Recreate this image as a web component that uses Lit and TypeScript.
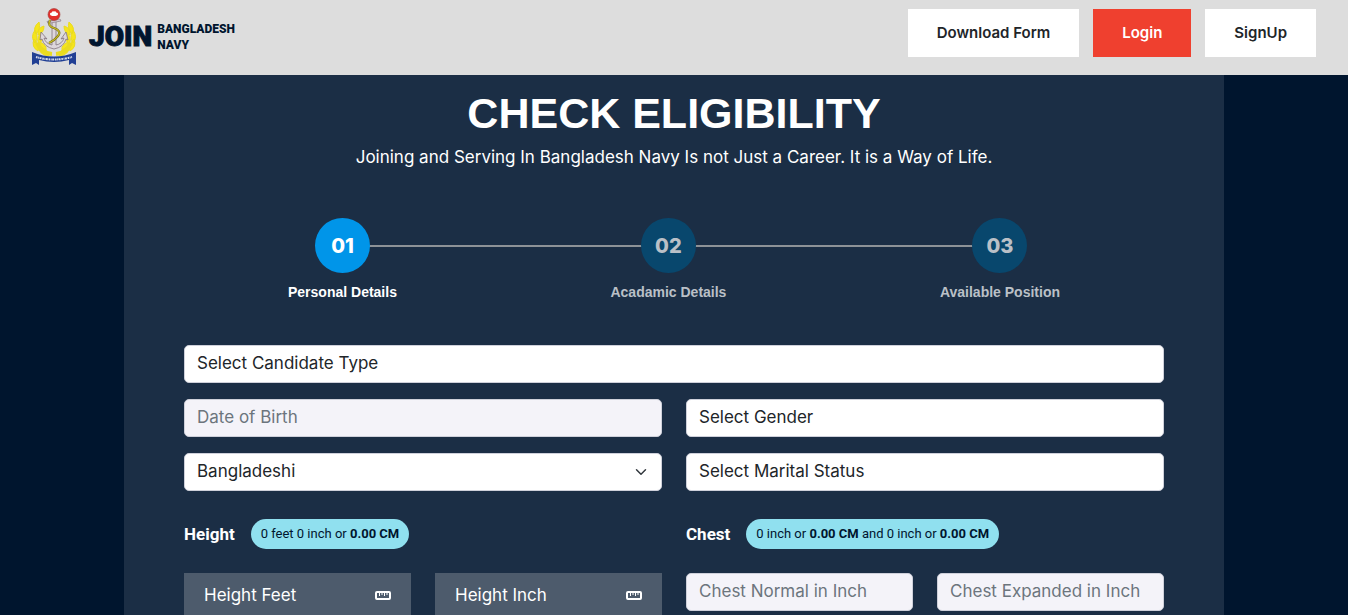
import { LitElement, html, css } from "lit";
import { customElement, property } from "lit/decorators.js";

const ruler = html`<svg class="ruler" viewBox="0 0 16 9" aria-hidden="true">
  <rect x="1" y="1" width="14" height="7" rx="1" fill="none" stroke="#fff" stroke-width="2" />
  <path d="M4.500 1v4M7 1v3M9.500 1v4M12 1v3" stroke="#fff" stroke-width="1" />
</svg>`;

@customElement("navy-logo")
export class NavyLogo extends LitElement {
  static styles = css`
    :host { display: block; }
    .brand { display: flex; align-items: center; color: #00152e; text-decoration: none; }
    .emblem { width: 44px; height: 58px; margin-right: 13px; }
    .name { display: flex; align-items: center; gap: 5px; font-family: Roboto, sans-serif; font-weight: 900; }
    .join { font-size: 28px; line-height: 34px; -webkit-text-stroke: 1px #00152e; }
    .rest { display: flex; flex-direction: column; font-size: 12px; line-height: 16px; }
  `;
  render() {
    return html`<a class="brand" href="#">
      <svg class="emblem" viewBox="0 0 44 58" aria-hidden="true">
        <g fill="#f6e51c" stroke="#eadb20" stroke-width="1" stroke-linejoin="round">
          <path d="M7 14Q0 20 4 26Q9 21 7 14ZM3 22Q-2 29 3 35Q7 29 3 22ZM2 31Q-1 39 6 43Q8 36 2 31ZM6 38Q7 47 17 48Q15 40 6 38ZM12 18Q5 20 6 27Q12 25 12 18ZM8 26Q4 31 7 36Q12 32 8 26ZM8 34Q8 41 14 42Q15 37 8 34Z" />
          <path d="M37 14Q44 20 40 26Q35 21 37 14ZM41 22Q46 29 41 35Q37 29 41 22ZM42 31Q45 39 38 43Q36 36 42 31ZM38 38Q37 47 27 48Q29 40 38 38ZM32 18Q39 20 38 27Q32 25 32 18ZM36 26Q40 31 37 36Q32 32 36 26ZM36 34Q36 41 30 42Q29 37 36 34Z" />
          <path d="M5 35Q9 45 20 46M39 35Q35 45 24 46" fill="none" stroke-width="4" />
        </g>
        <path d="M20 11h4v26q6-1 8-7l-3 1 5-7 2 8-2-1q-2 8-12 10q-10-2-12-10l-2 1 1-8 6 7-3-1q2 6 8 7Z" fill="#ddd6dc" stroke="#83747f" stroke-width=".8" />
        <path d="M15 13.500l13-2.500 1 2-13 2.500Z" fill="#cfc6cf" stroke="#83747f" stroke-width=".6" />
        <path d="M18 12q-3 6 4 8q8 3 4 8q-3 4-9 7" fill="none" stroke="#756c16" stroke-width="2.200" />
        <path d="M18 12q-3 6 4 8q8 3 4 8q-3 4-9 7" fill="none" stroke="#c9bd28" stroke-width="1.200" />
        <circle cx="22" cy="6.500" r="6" fill="#e32f2c" stroke="#9f3a35" stroke-width=".6" />
        <path d="M18 6q0-1.500 1.500-1.200q1-2 2.500-1.200q1.500-.8 2.500 1.200q1.500-.3 1.500 1.200q0 2-4 2t-4-2Z" fill="#fff" />
        <path d="M0 44q22 9 44 0v13l-4-2-3 2v-5q-15 4-30 0v5l-3-2-4 2Z" fill="#213f94" />
        <path d="M4 49q18 5 36 0" fill="none" stroke="#d6dced" stroke-width="2" stroke-dasharray="1.6 .6 .9 .5 2 .8" />
      </svg>
      <span class="name"><span class="join">JOIN</span><span class="rest"><span>BANGLADESH</span><span>NAVY</span></span></span>
    </a>`;
  }
}

@customElement("step-list")
export class StepList extends LitElement {
  @property({ type: Number }) current = 0;
  static styles = css`
    :host { display: block; }
    .steps {
      display: flex; justify-content: space-between; list-style: none; margin: 0; padding: 0;
      background: linear-gradient(#8d9297, #8d9297) center 27px / calc(100% - 112px) 2px no-repeat;
    }
    .step { display: flex; flex-direction: column; align-items: center; gap: 9px; color: #bac0c7; }
    .circle {
      display: grid; place-items: center; width: 55px; height: 55px; border-radius: 50%;
      background: #08476d; font: 800 20px/24px Inter, sans-serif;
    }
    .label { font: 700 14px/20px "Liberation Sans", sans-serif; }
    .active { color: #fff; }
    .active .circle { background: #0095e9; }
  `;
  render() {
    return html`<ol class="steps">
      ${["Personal Details", "Acadamic Details", "Available Position"].map(
        (label, i) => html`<li class="step ${i === this.current ? "active" : ""}">
          <span class="circle">0${i + 1}</span><span class="label">${label}</span>
        </li>`
      )}
    </ol>`;
  }
}

@customElement("app-root")
export class AppRoot extends LitElement {
  static styles = css`
    * { box-sizing: border-box; }
    :host { display: flex; flex-direction: column; height: 100vh; padding-right: 1px; background: #fff; font-family: Inter, sans-serif; }
    .header { display: flex; justify-content: space-between; align-items: flex-start; flex: none; padding: 8px 32px 9px; background: #ddd; }
    .nav { display: flex; gap: 14px; padding-top: 1px; }
    .btn { padding: 12px 29px; border: 0; background: #fff; color: #212529; font: 600 15px/24px Inter, sans-serif; text-decoration: none; cursor: pointer; }
    .primary { background: #ef402f; color: #fff; }
    .page { flex: 1; min-height: 0; overflow-y: auto; scrollbar-width: none; background: #00152e; }
    .panel { max-width: 1100px; min-height: 100%; margin: 0 auto; padding: 12px 60px 60px; background: #1b2e45; color: #fff; }
    .title { margin: 0; text-align: center; font: 700 43px/52px "Liberation Sans", sans-serif; }
    .lead { margin: 6px 0 0; text-align: center; font-size: 17px; line-height: 24px; }
    .progress { margin: 49px 104px 0; }
    .form { display: grid; grid-template-columns: 1fr 1fr; gap: 16px 24px; margin-top: 43px; }
    .wide { grid-column: 1 / -1; }
    .field {
      width: 100%; height: 38px; margin: 0; padding: 0 12px 2px; border: 1px solid #ced0da; border-radius: 5px;
      background: #fff; color: #212529; font: 400 17px/24px Inter, sans-serif; appearance: none;
    }
    input.field { background: #f4f3f9; }
    .field::placeholder { color: #6c757d; opacity: 1; }
    .arrow {
      background: #fff url("data:image/svg+xml,%3csvg xmlns='http://www.w3.org/2000/svg' viewBox='0 0 16 16'%3e%3cpath fill='none' stroke='%23343a40' stroke-linecap='round' stroke-linejoin='round' stroke-width='2' d='m2 5 6 6 6-6'/%3e%3c/svg%3e") right 14px center / 12px no-repeat;
    }
    .group { display: grid; grid-template-columns: 1fr 1fr; align-items: start; align-content: start; gap: 24px; min-width: 0; margin-top: 12px; }
    .caption { grid-column: 1 / -1; display: flex; align-items: center; gap: 16px; }
    .heading { margin: 0; font: 700 17px/24px Roboto, sans-serif; }
    .pill { padding: 0 10px; border-radius: 15px; background: #90e0ef; color: #00152e; font: 400 13px/30px Roboto, sans-serif; }
    .pill b { font-weight: 700; }
    .measure { display: flex; align-items: center; gap: 8px; padding: 10px 20px; background: #4d5b6c; }
    .measure input { flex: 1; min-width: 0; width: 0; padding: 0; border: 0; background: none; color: #fff; font: 400 17px/24px Inter, sans-serif; }
    .measure input::placeholder { color: #fff; opacity: 1; }
    .ruler { flex: none; width: 16px; height: 9px; }
  `;
  render() {
    return html`
      <header class="header">
        <navy-logo></navy-logo>
        <nav class="nav">
          <a class="btn" href="#">Download Form</a>
          <button class="btn primary" type="button">Login</button>
          <button class="btn" type="button">SignUp</button>
        </nav>
      </header>
      <main class="page">
        <div class="panel">
          <h1 class="title">CHECK ELIGIBILITY</h1>
          <p class="lead">Joining and Serving In Bangladesh Navy Is not Just a Career. It is a Way of Life.</p>
          <step-list class="progress" current="0"></step-list>
          <form class="form">
            <select class="field wide" aria-label="Candidate type"><option>Select Candidate Type</option></select>
            <input class="field" aria-label="Date of Birth" placeholder="Date of Birth" />
            <select class="field" aria-label="Gender"><option>Select Gender</option></select>
            <select class="field arrow" aria-label="Nationality"><option>Bangladeshi</option></select>
            <select class="field" aria-label="Marital status"><option>Select Marital Status</option></select>
            <div class="group">
              <div class="caption"><h2 class="heading">Height</h2><span class="pill">0 feet 0 inch or <b>0.00 CM</b></span></div>
              <label class="measure"><input aria-label="Height Feet" placeholder="Height Feet" />${ruler}</label>
              <label class="measure"><input aria-label="Height Inch" placeholder="Height Inch" />${ruler}</label>
            </div>
            <div class="group">
              <div class="caption"><h2 class="heading">Chest</h2><span class="pill">0 inch or <b>0.00 CM</b> and 0 inch or <b>0.00 CM</b></span></div>
              <input class="field" aria-label="Chest Normal in Inch" placeholder="Chest Normal in Inch" />
              <input class="field" aria-label="Chest Expanded in Inch" placeholder="Chest Expanded in Inch" />
            </div>
          </form>
        </div>
      </main>
    `;
  }
}
